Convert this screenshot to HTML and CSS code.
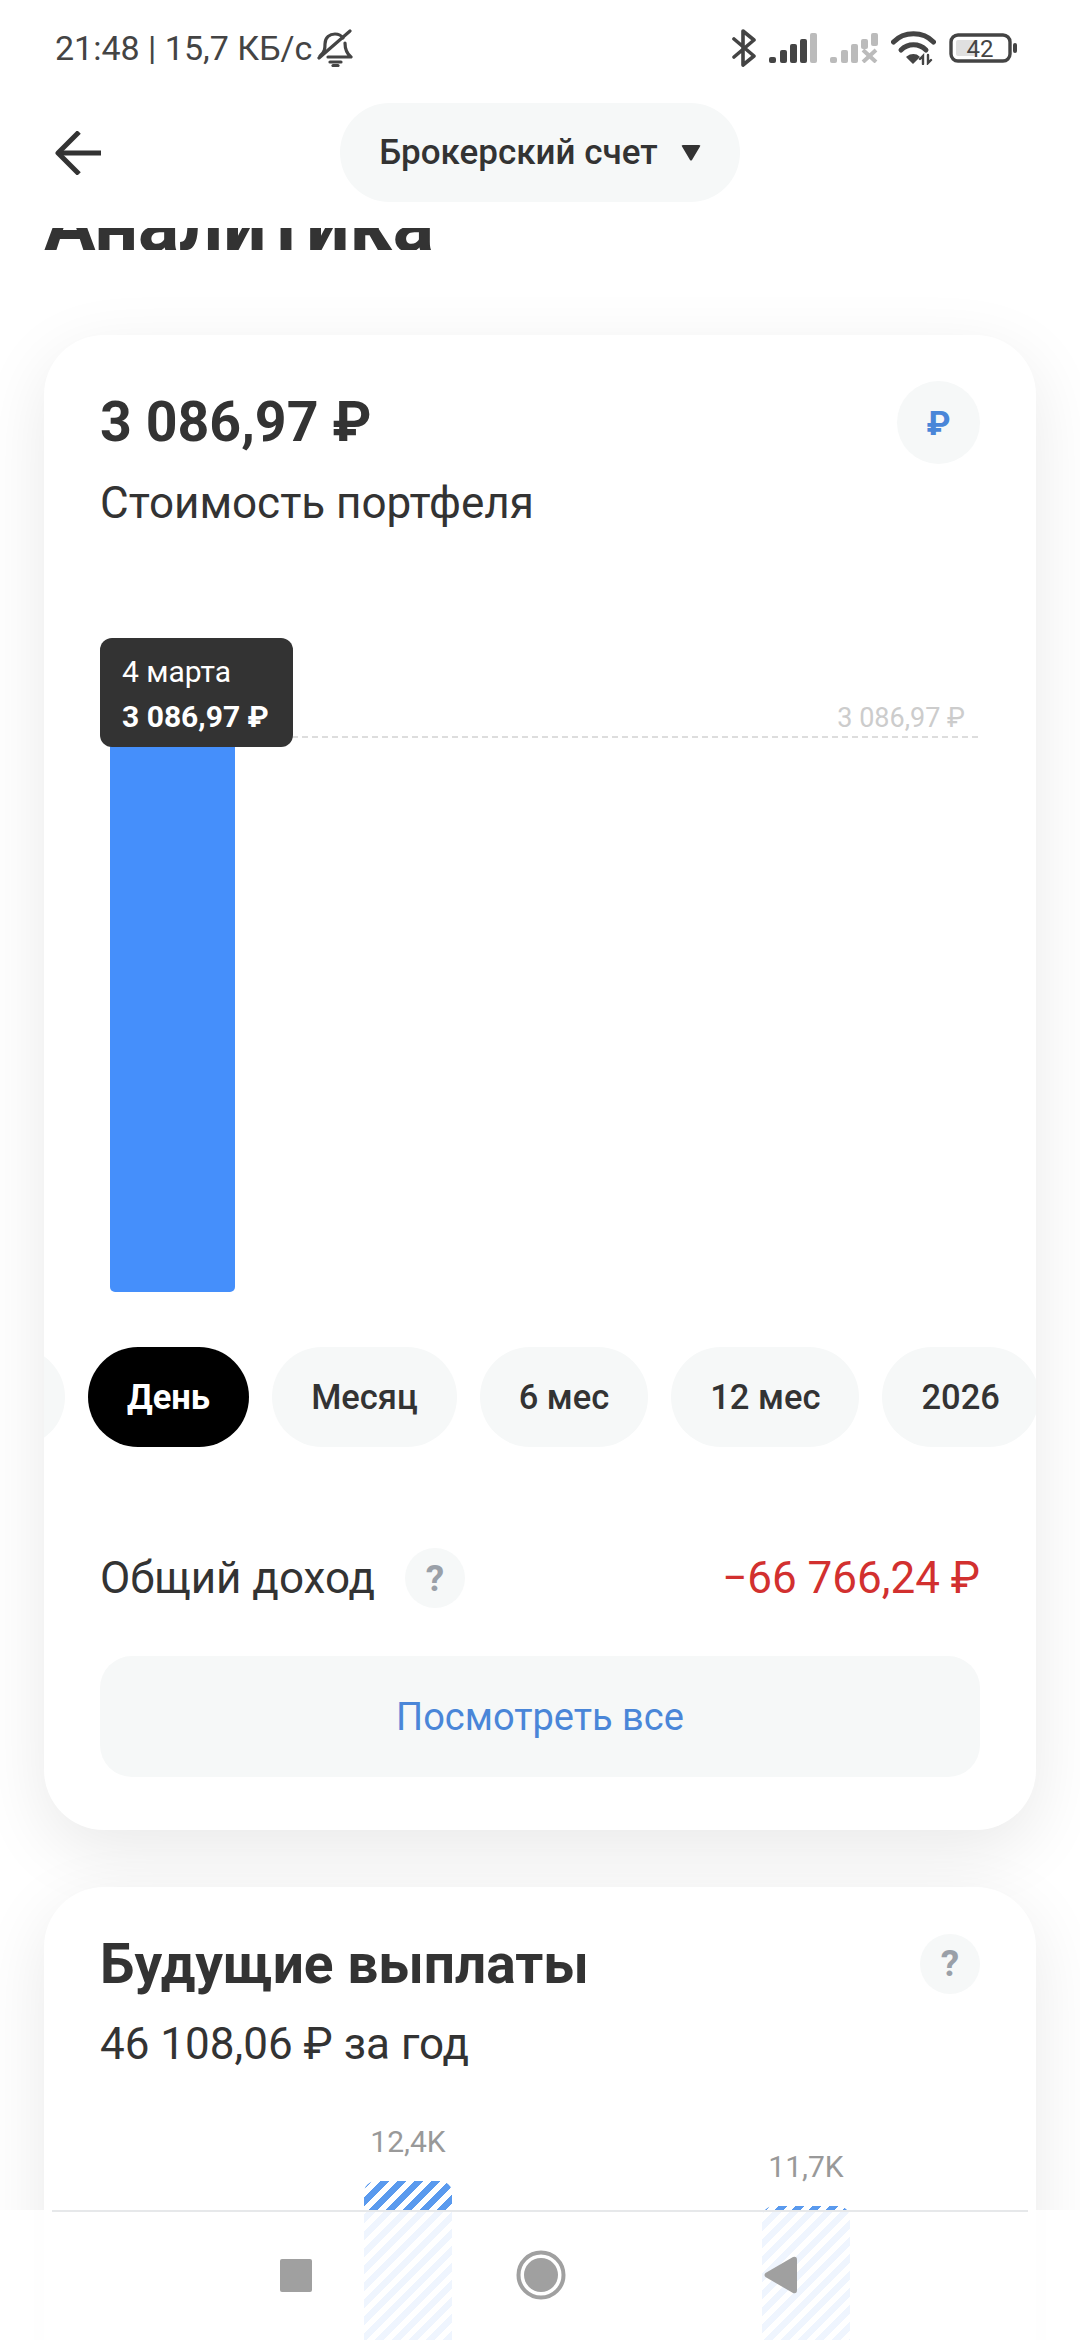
FILE: index.html
```html
<!doctype html>
<html>
  <head>
    <title>Аналитика</title>
    <link rel="stylesheet" href="styles.css">
  </head>
  <body>
    <div class='page'>
      <!-- status bar -->
      <div class='status-bar'>
        <div class='status-left'>
          <span>21:48 | 15,7 КБ/с</span>
          <svg class='bell' width='36' height='38' viewBox='0 0 36 38' fill='none' stroke='#444' stroke-width='3.2' stroke-linecap='round' stroke-linejoin='round'>
            <path d='M3 27 C8 23 8 19 8 15 C8 8 13 5 18 5 C21 5 24 6 26 9'/>
            <path d='M28 14 C28 20 29 24 34 28 H11'/>
            <path d='M2 29 L33 2'/>
            <path d='M13 33 H24'/>
            <path d='M16 36.500 H21'/>
          </svg>
        </div>
        <div class='status-right'>
          <svg class='bluetooth' width='24' height='38' viewBox='0 0 24 38' fill='none' stroke='#444' stroke-width='3.6' stroke-linecap='round' stroke-linejoin='round'>
            <path d='M2 10 L22 27 L11 36 V2 L22 11 L2 28'/>
          </svg>
          <svg width='48' height='30' viewBox='0 0 48 30'>
            <rect x='0' y='24' width='7' height='6' rx='2' fill='#444'/>
            <rect x='11' y='17' width='7' height='13' rx='2' fill='#444'/>
            <rect x='21' y='11' width='7' height='19' rx='2' fill='#444'/>
            <rect x='31' y='6' width='7' height='24' rx='2' fill='#444'/>
            <rect x='41' y='0' width='7' height='30' rx='2' fill='#bbb'/>
          </svg>
          <svg width='48' height='30' viewBox='0 0 48 30'>
            <rect x='0' y='24' width='7' height='6' rx='2' fill='#bbb'/>
            <rect x='11' y='17' width='7' height='13' rx='2' fill='#bbb'/>
            <rect x='21' y='11' width='7' height='19' rx='2' fill='#bbb'/>
            <rect x='31' y='6' width='7' height='10' rx='2' fill='#bbb'/>
            <rect x='41' y='0' width='7' height='13' rx='2' fill='#bbb'/>
            <path d='M33 17 L46 29 M46 17 L33 29' stroke='#bbb' stroke-width='4'/>
          </svg>
          <svg width='45' height='34' viewBox='0 0 45 34' fill='none' stroke='#444' stroke-linecap='round'>
            <path d='M2.500 11 C13 0 32 0 42.500 11' stroke-width='5'/>
            <path d='M10 19 C17 12 28 12 35 19' stroke-width='5'/>
            <path d='M16 26 C20 23 25 23 28 26 L22 32 Z' fill='#444' stroke-width='1.500' stroke-linejoin='round'/>
            <path d='M32 33 V25 L29 28 M37 24 V32 L40 29' stroke-width='2.400'/>
          </svg>
          <svg width='68' height='30' viewBox='0 0 68 30'>
            <rect x='2' y='2' width='59' height='26' rx='7' fill='none' stroke='#444' stroke-width='3.400'/>
            <rect x='7' y='7' width='20' height='16' rx='2' fill='#e0e0e0'/>
            <rect x='64' y='10' width='4' height='10' rx='2' fill='#444'/>
            <text x='31' y='24' text-anchor='middle' class='battery-level'>42</text>
          </svg>
        </div>
      </div>

      <!-- header -->
      <div class='top-bar'>
        <svg class='back' width='46' height='44' viewBox='0 0 46 44' fill='none' stroke='#333' stroke-width='5' stroke-linejoin='round'>
          <path d='M46 22 H3'/>
          <path d='M24 1 L3 22 L24 43'/>
        </svg>
        <div class='account-pill'>
          <span>Брокерский счет</span>
          <svg width='20' height='16' viewBox='0 0 20 16'><path d='M1 1.500 Q0 0 2 0 H18 Q20 0 19 1.500 L11 15 Q10 16 9 15 Z' fill='#333'/></svg>
        </div>
      </div>

      <div class='page-title'><h1>Аналитика</h1></div>

      <!-- portfolio card -->
      <div class='card'>
        <div class='card-head'>
          <div class='amount'>3 086,97 ₽</div>
          <div class='currency'>₽</div>
        </div>
        <div class='subtitle'>Стоимость портфеля</div>

        <div class='chart'>
          <div class='bar'></div>
          <div class='level'>3 086,97 ₽</div>
          <div class='tooltip'>
            <div>4 марта</div>
            <div class='tooltip-value'>3 086,97 ₽</div>
          </div>
        </div>

        <div class='periods'>
          <div class='chip chip-hidden'></div>
          <div class='chip active'>День</div>
          <div class='chip'>Месяц</div>
          <div class='chip'>6 мес</div>
          <div class='chip'>12 мес</div>
          <div class='chip'>2026</div>
        </div>

        <div class='income'>
          <div class='income-label'>
            <span>Общий доход</span>
            <div class='help'>?</div>
          </div>
          <div class='income-value'>−66 766,24 ₽</div>
        </div>

        <div class='more-button'>Посмотреть все</div>
      </div>

      <!-- payouts card -->
      <div class='card card-second'>
        <div class='card-head card-head-second'>
          <h2>Будущие выплаты</h2>
          <div class='help'>?</div>
        </div>
        <div class='subtitle subtitle-second'>46 108,06 ₽ за год</div>

        <div class='payouts'>
          <div class='payout'>
            <div class='payout-label'>12,4K</div>
            <div class='payout-bar'></div>
          </div>
          <div class='payout payout-low'>
            <div class='payout-label'>11,7K</div>
            <div class='payout-bar'></div>
          </div>
        </div>
      </div>

      <!-- android nav bar -->
      <div class='nav-bar'>
        <div class='nav-line'></div>
        <div class='nav-icons'>
          <svg width='32' height='33' viewBox='0 0 32 33'><rect width='32' height='33' rx='2' fill='#a0a0a0'/></svg>
          <svg class='nav-home' width='50' height='50' viewBox='0 0 50 50'>
            <circle cx='25' cy='25' r='22.500' fill='none' stroke='#a0a0a0' stroke-width='4'/>
            <circle cx='25' cy='25' r='17' fill='#a0a0a0'/>
          </svg>
          <svg width='34' height='38' viewBox='0 0 34 38'><path d='M1.500 17 L29 1 Q33 0 33 4 V34 Q33 38 29 37 L1.500 21 Q-0.500 19 1.500 17 Z' fill='#a0a0a0'/></svg>
        </div>
      </div>
    </div>
  </body>
</html>
```

FILE: styles.css
```css
* {
  box-sizing: border-box;
}

body {
  margin: 0;
  background: #fff;
  font-family: Roboto, "Noto Sans", sans-serif;
  color: #333;
}

.page {
  position: relative;
  width: 1080px;
  height: 2340px;
  overflow: hidden;
  background: #fff;
}

/* status bar */
.status-bar {
  height: 96px;
  padding: 0 63px 0 55px;
  display: flex;
  align-items: center;
  justify-content: space-between;
}

.status-left {
  display: flex;
  align-items: center;
  gap: 5px;
  font-size: 34px;
  color: #444;
}

.status-right {
  display: flex;
  align-items: center;
  gap: 13px;
}

.battery-level {
  font-family: Roboto, sans-serif;
  font-size: 24px;
  fill: #444;
}

/* header */
.top-bar {
  margin-top: 7px;
  display: grid;
  grid-template-columns: 1fr auto 1fr;
  align-items: center;
}

.back {
  margin-left: 55px;
}

.account-pill {
  height: 99px;
  padding: 0 39px;
  display: flex;
  align-items: center;
  gap: 23px;
  border-radius: 50px;
  background: #f6f8f8;
  font-size: 35px;
  font-weight: 500;
}

.page-title {
  height: 22px;
  margin: 26px 0 0 44px;
  overflow: hidden;
  display: flex;
  align-items: flex-end;
}

.page-title h1 {
  margin: 0 0 -17px;
  font-size: 77px;
  line-height: 84px;
  font-weight: 700;
}

/* cards */
.card {
  position: relative;
  margin: 85px 44px 0;
  padding: 46px 56px 53px;
  border-radius: 60px;
  background: #fff;
  box-shadow: 0 20px 70px rgba(0, 0, 0, 0.09);
}

.card-second {
  margin-top: 57px;
  height: 700px;
}

.card-head {
  display: flex;
  align-items: center;
  justify-content: space-between;
}

.card-head-second {
  height: 61px;
}

.amount {
  font-size: 55.5px;
  font-weight: 700;
}

.currency {
  width: 83px;
  height: 83px;
  border-radius: 50%;
  background: #f6f8f8;
  display: flex;
  align-items: center;
  justify-content: center;
  color: #4a86d8;
  font-size: 34px;
  font-weight: 700;
}

.subtitle {
  margin-top: 14px;
  font-size: 44px;
  line-height: 50px;
}

.subtitle-second {
  margin-top: 25px;
}

h2 {
  margin: 0;
  font-size: 55px;
  font-weight: 700;
}

/* value chart */
.chart {
  position: relative;
  height: 654px;
  margin-top: 110px;
  padding: 50px 0 0 10px;
}

.bar {
  width: 125px;
  height: 604px;
  border-radius: 0 0 5px 5px;
  background: #458ffb;
}

.level {
  position: absolute;
  left: 192px;
  right: 2px;
  top: 63px;
  height: 37px;
  border-bottom: 2px dashed #ddd;
  padding-right: 13px;
  text-align: right;
  font-size: 27px;
  line-height: 34px;
  color: #ccc;
}

.tooltip {
  position: absolute;
  left: 0;
  top: 0;
  width: 193px;
  height: 109px;
  padding: 16px 22px 0;
  border-radius: 12px;
  background: #333;
  color: #fff;
  font-size: 30px;
  line-height: 36px;
}

.tooltip-value {
  margin-top: 9px;
  font-weight: 700;
}

/* period chips */
.periods {
  margin: 55px -56px 0;
  display: flex;
  gap: 23px;
  overflow: hidden;
}

.chip {
  flex: none;
  height: 100px;
  padding: 0 39px;
  display: flex;
  align-items: center;
  border-radius: 50px;
  background: #f6f8f8;
  font-size: 34.5px;
  font-weight: 500;
}

.chip-hidden {
  width: 100px;
  margin-left: -79px;
}

.chip.active {
  background: #000;
  color: #fff;
  font-weight: 700;
}

/* income */
.income {
  margin-top: 101px;
  display: flex;
  align-items: center;
  justify-content: space-between;
  font-size: 44px;
}

.income-label {
  display: flex;
  align-items: center;
  gap: 30px;
}

.income-value {
  color: #d2302f;
}

.help {
  width: 60px;
  height: 60px;
  border-radius: 50%;
  background: #f6f8f8;
  display: flex;
  align-items: center;
  justify-content: center;
  color: #9aa0a8;
  font-size: 37px;
  font-weight: 700;
}

.more-button {
  height: 121px;
  margin-top: 48px;
  display: flex;
  align-items: center;
  justify-content: center;
  border-radius: 32px;
  background: #f6f8f8;
  color: #4a86d8;
  font-size: 38px;
}

/* payouts chart */
.payouts {
  margin-top: 55px;
  padding-left: 264px;
  display: flex;
  gap: 310px;
}

.payout {
  width: 88px;
  display: flex;
  flex-direction: column;
  align-items: center;
}

.payout-low {
  margin-top: 25px;
}

.payout-label {
  font-size: 30px;
  line-height: 36px;
  color: #999;
}

.payout-bar {
  width: 88px;
  height: 300px;
  margin-top: 21px;
  border-radius: 12px 12px 0 0;
  background: repeating-linear-gradient(135deg, #5a9aee 0, #5a9aee 6px, #fff 6px, #fff 12px);
}

/* nav bar */
.nav-bar {
  position: absolute;
  left: 0;
  right: 0;
  bottom: 0;
  height: 130px;
  background: rgba(255, 255, 255, 0.9);
}

.nav-line {
  height: 2px;
  margin: 0 52px;
  background: #e6e8ea;
}

.nav-icons {
  height: 126px;
  padding-left: 280px;
  display: flex;
  align-items: center;
  gap: 201px;
}

.nav-home {
  margin: 0 -3px 0 3px;
}
```
